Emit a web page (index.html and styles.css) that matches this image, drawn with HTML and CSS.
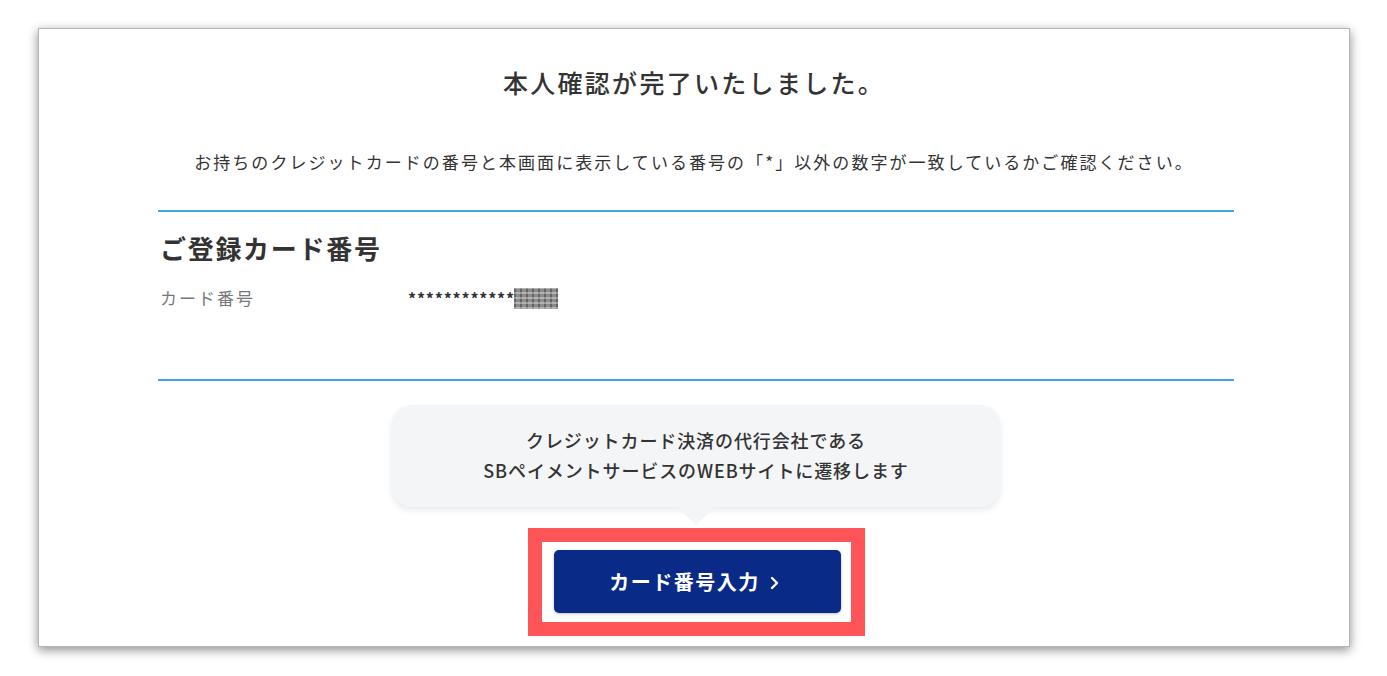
FILE: index.html
```html
<!DOCTYPE html>
<html lang="ja">

<head>
    <meta charset="UTF-8">
    <meta name="viewport" content="width=device-width, initial-scale=1.0">
    <title>本人確認完了</title>
    <link rel="stylesheet" href="styles.css">
</head>

<body>
    <div class="page">
        <div class="card">
            <h1 class="title">本人確認が完了いたしました。</h1>
            <p class="lead">お持ちのクレジットカードの番号と本画面に表示している番号の「*」以外の数字が一致しているかご確認ください。</p>

            <!-- 登録カード -->
            <section class="info">
                <h2 class="info_title">ご登録カード番号</h2>
                <dl class="info_row">
                    <dt>カード番号</dt>
                    <dd>************<span class="mask"></span></dd>
                </dl>
            </section>

            <!-- 吹き出し + ボタン -->
            <div class="action">
                <div class="balloon">
                    クレジットカード決済の代行会社である<br>
                    SBペイメントサービスのWEBサイトに遷移します
                </div>
                <div class="highlight">
                    <a href="javascript:;" class="btn">カード番号入力
                        <svg class="chev" width="9" height="14" viewBox="0 0 9 14">
                            <path d="M2 2 L7 7 L2 12" fill="none" stroke="#fff" stroke-width="2.4" stroke-linecap="round" stroke-linejoin="round" />
                        </svg>
                    </a>
                </div>
            </div>
        </div>
    </div>
</body>

</html>
```

FILE: styles.css
```css
* {
    margin: 0;
    padding: 0;
    box-sizing: border-box;
}

a {
    text-decoration: none;
}

body {
    background-color: #fff;
    font-family: "Noto Sans CJK JP", "Noto Sans", sans-serif;
    color: #333;
}

.page {
    width: 1387px;
    height: 676px;
    padding: 28px 37px 0 38px;
}

.card {
    height: 619px;
    background-color: #fff;
    border: 1px solid #b5b5b5;
    box-shadow: 0 3px 10px rgba(0, 0, 0, 0.45);
    padding-top: 35px;
}

.title {
    font-size: 25px;
    font-weight: 500;
    line-height: 36px;
    letter-spacing: 2.3px;
    text-align: center;
    color: #333;
}

.lead {
    margin-top: 50px;
    font-size: 17px;
    line-height: 24px;
    letter-spacing: 2.05px;
    text-align: center;
    color: #333;
}

.info {
    width: 1076px;
    margin: 36px 0 0 119px;
    border-top: 2px solid #3fa6ee;
    border-bottom: 2px solid #3fa6ee;
    padding: 19px 2px 69px;
}

.info_title {
    font-size: 26px;
    font-weight: 700;
    line-height: 34px;
    letter-spacing: 1.7px;
    color: #333;
}

.info_row {
    display: flex;
    margin-top: 21px;
    line-height: 24px;
}

.info_row dt {
    width: 248px;
    font-size: 17px;
    letter-spacing: 2px;
    color: #777;
}

.info_row dd {
    display: flex;
    align-items: center;
    font-size: 16px;
    font-weight: 700;
    letter-spacing: 0.8px;
    color: #333;
}

.mask {
    display: inline-block;
    width: 44px;
    height: 21px;
    margin-left: -1px;
    background-color: #8c8c8c;
    background-image:
        repeating-linear-gradient(0deg, rgba(255, 255, 255, 0.35) 0 2px, transparent 2px 5px),
        repeating-linear-gradient(90deg, rgba(60, 60, 60, 0.5) 0 2px, transparent 2px 6px);
}

.action {
    display: flex;
    flex-direction: column;
    align-items: center;
    margin-top: 24px;
    padding-left: 4px;
}

.balloon {
    position: relative;
    width: 608px;
    padding: 20px 0 22px;
    background-color: #f4f5f7;
    border-radius: 20px;
    box-shadow: 0 3px 6px rgba(60, 70, 110, 0.12);
    font-size: 18px;
    font-weight: 500;
    line-height: 30px;
    letter-spacing: 0.9px;
    text-align: center;
    color: #333;
}

.balloon::after {
    content: "";
    position: absolute;
    left: 50%;
    bottom: -13px;
    width: 26px;
    height: 26px;
    margin-left: -13px;
    background-color: #f4f5f7;
    transform: rotate(45deg);
    box-shadow: 3px 3px 4px rgba(60, 70, 110, 0.1);
    clip-path: polygon(100% 0, 100% 100%, 0 100%);
}

.highlight {
    margin-top: 21px;
    border: 14px solid #ff5558;
    padding: 8px 10px 9px 12px;
}

.btn {
    display: flex;
    align-items: center;
    justify-content: center;
    gap: 10px;
    width: 287px;
    height: 63px;
    padding-right: 6px;
    background-color: #0a2a87;
    border-radius: 5px;
    box-shadow: 0 1px 3px rgba(0, 0, 0, 0.25);
    color: #fff;
    font-size: 20px;
    font-weight: 700;
    letter-spacing: 1.5px;
}

.chev {
    margin-top: 2px;
}
```
